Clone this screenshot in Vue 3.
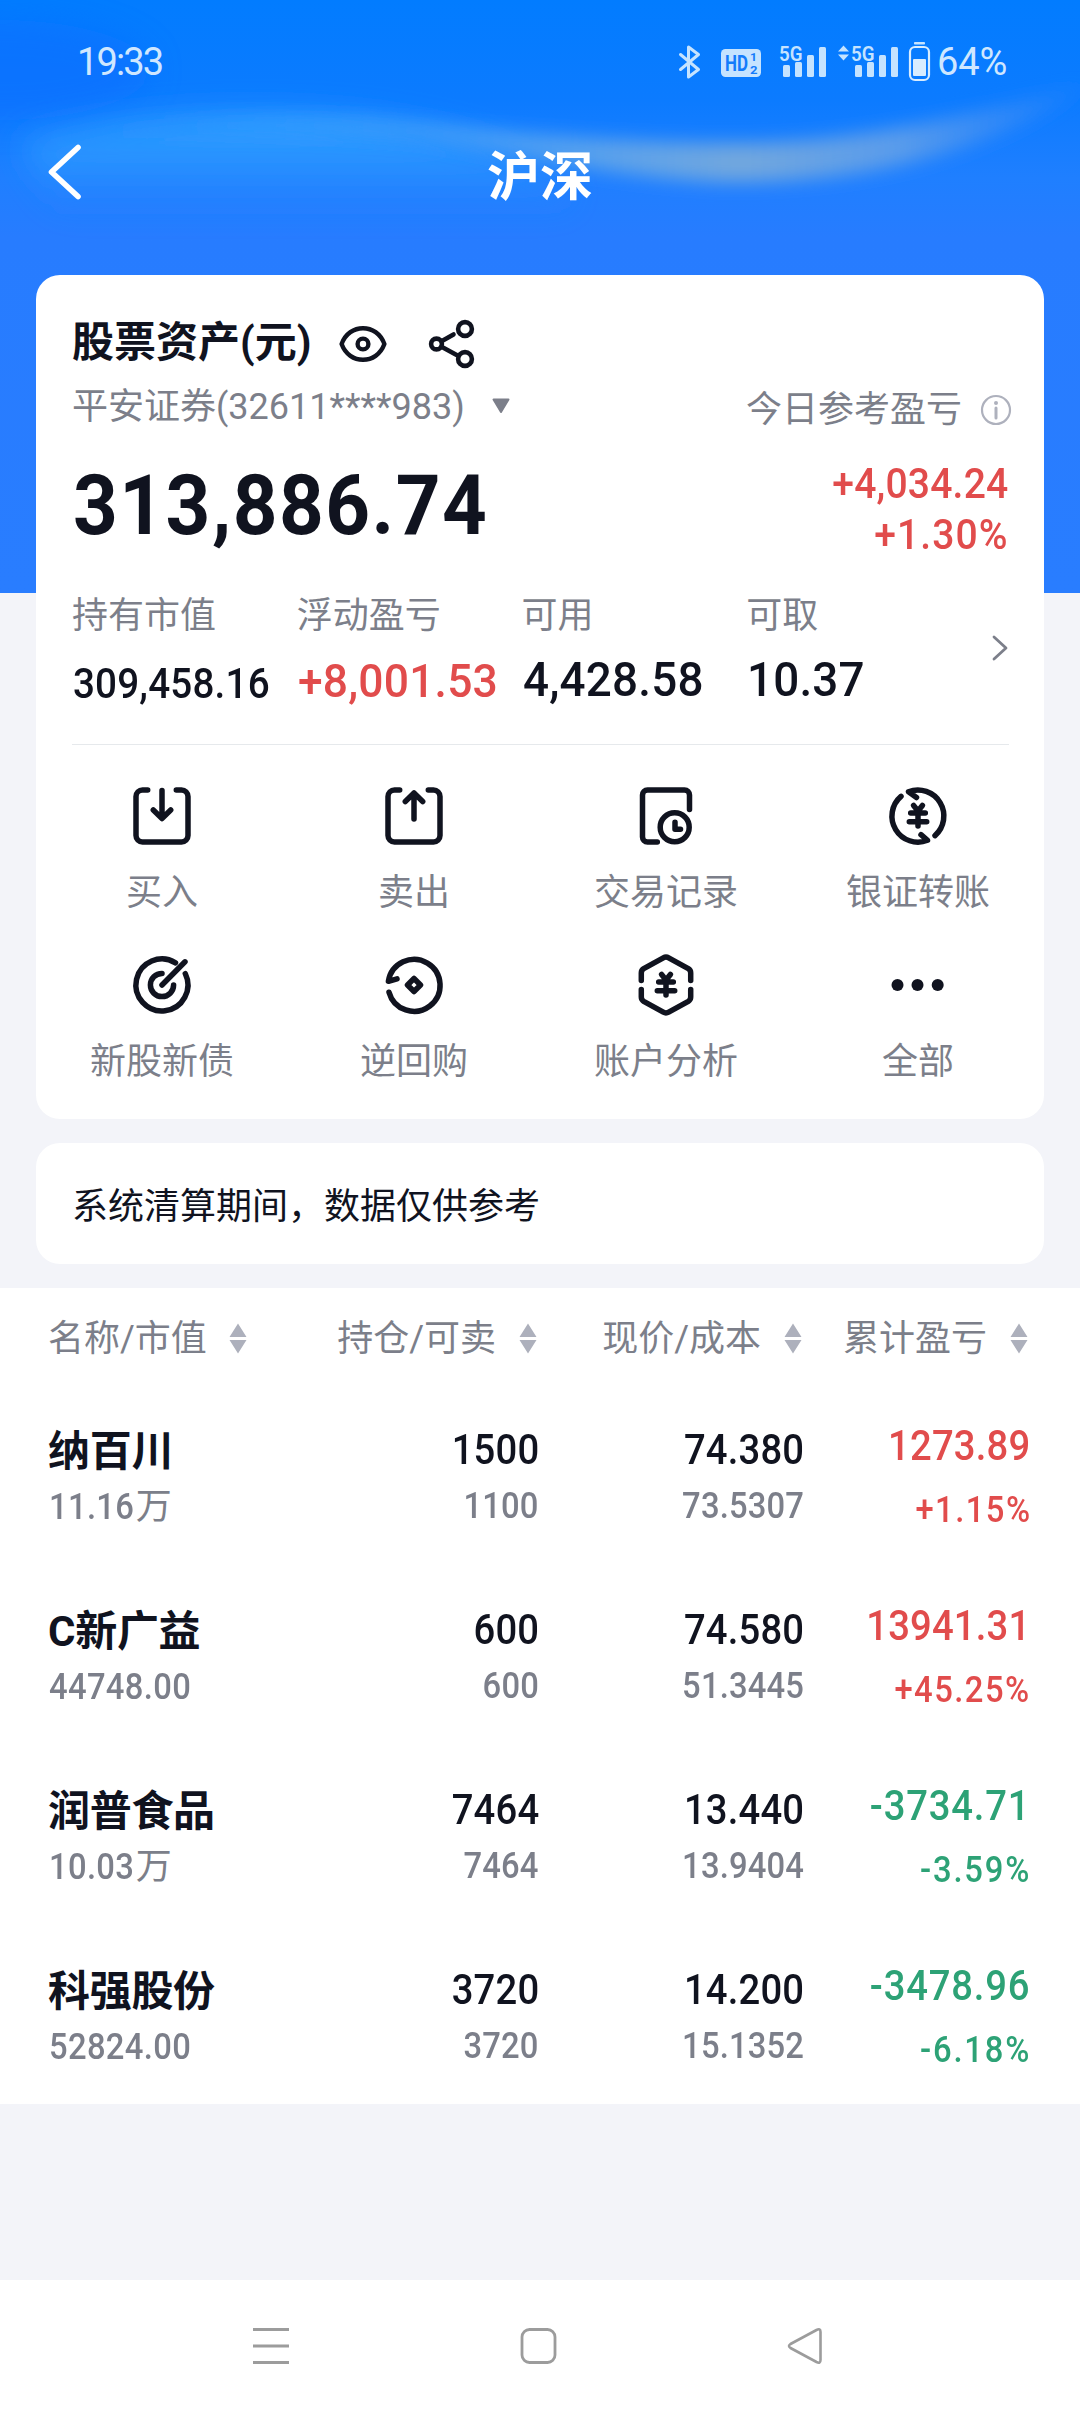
<script setup>
const stats = [
  { label: '持有市值', value: '309,458.16', size: 'small' },
  { label: '浮动盈亏', value: '+8,001.53', size: 'medium up' },
  { label: '可用', value: '4,428.58', size: 'large' },
  { label: '可取', value: '10.37', size: 'large' }
]

const yen = 'M25.6 19.5L30 25l4.4-5.5M30 25V40M22.7 27H37.3M21.3 35.7H38.7'

const actions = [
  {
    label: '买入',
    d: 'M15.7 4H10.5a6.5 6.5 0 0 0-6.5 6.5V49.5a6.5 6.5 0 0 0 6.5 6.5H49.5a6.5 6.5 0 0 0 6.5-6.5V10.5A6.5 6.5 0 0 0 49.5 4H44.3M30 4.5V32M21.3 24L30 32.5 38.7 24'
  },
  {
    label: '卖出',
    d: 'M15.7 4H10.5a6.5 6.5 0 0 0-6.5 6.5V49.5a6.5 6.5 0 0 0 6.5 6.5H49.5a6.5 6.5 0 0 0 6.5-6.5V10.5A6.5 6.5 0 0 0 49.5 4H44.3M30 33V7M21.3 15.5L30 7l8.7 8.5'
  },
  {
    label: '交易记录',
    d: 'M53.5 23.5V9a5 5 0 0 0-5-5H11.5a5 5 0 0 0-5 5V51a5 5 0 0 0 5 5H21.3M53.2 41.3a14.5 14.5 0 1 1-29 0a14.5 14.5 0 1 1 29 0M39 36.3V43.2H44.5'
  },
  {
    label: '银证转账',
    d: 'M13 10.4A26 26 0 0 0 39.5 54.3L33 48.7M47 49.6A26 26 0 0 0 20.5 5.8L28.5 11.5' + yen
  },
  {
    label: '新股新债',
    d: 'M43.5 7.8A26 26 0 1 0 53.3 18.6M30 18.4A11.6 11.6 0 1 0 41.6 30M30 30L53 6.8'
  },
  {
    label: '逆回购',
    d: 'M5 37.2A26 26 0 1 0 4.4 26.3L13 23.8M30 23.5L36.5 30 30 36.5 23.5 30z'
  },
  {
    label: '账户分析',
    d: 'M5.3 25.5V18q0-2.8 2.4-4.3L27.3 2.8q2.7-1.5 5.4 0L52.3 13.7q2.4 1.5 2.4 4.3V25.5M5.3 34.5V42q0 2.8 2.4 4.3L27.3 57.2q2.7 1.5 5.4 0L52.3 46.3q2.4-1.5 2.4-4.3V34.5' + yen
  },
  { label: '全部', dots: true }
]

const columns = ['名称/市值', '持仓/可卖', '现价/成本', '累计盈亏']

const holdings = [
  { name: '纳百川', value: '11.16', unit: '万', qty: '1500', sellable: '1100', price: '74.380', cost: '73.5307', profit: '1273.89', rate: '+1.15%', dir: 'up' },
  { name: 'C新广益', value: '44748.00', unit: '', qty: '600', sellable: '600', price: '74.580', cost: '51.3445', profit: '13941.31', rate: '+45.25%', dir: 'up' },
  { name: '润普食品', value: '10.03', unit: '万', qty: '7464', sellable: '7464', price: '13.440', cost: '13.9404', profit: '-3734.71', rate: '-3.59%', dir: 'down' },
  { name: '科强股份', value: '52824.00', unit: '', qty: '3720', sellable: '3720', price: '14.200', cost: '15.1352', profit: '-3478.96', rate: '-6.18%', dir: 'down' }
]
</script>

<template>
  <div class="page">
    <svg class="backdrop" width="1080" height="593" viewBox="0 0 1080 593" aria-hidden="true">
      <defs>
        <linearGradient id="base" x1="0" y1="0" x2="0" y2="1">
          <stop offset="0" stop-color="#027cff" />
          <stop offset="0.17" stop-color="#0c7bff" />
          <stop offset="0.3" stop-color="#1f7fff" />
          <stop offset="0.4" stop-color="#277cff" />
          <stop offset="1" stop-color="#297dff" />
        </linearGradient>
        <linearGradient id="wave" x1="0" y1="0" x2="1" y2="0">
          <stop offset="0" stop-color="#1f8cff" stop-opacity="0" />
          <stop offset="0.2" stop-color="#2f9dff" stop-opacity="0.7" />
          <stop offset="0.45" stop-color="#4a9ef5" />
          <stop offset="0.67" stop-color="#72a7de" />
          <stop offset="0.82" stop-color="#5a9ceb" />
          <stop offset="1" stop-color="#2f86fa" stop-opacity="0.3" />
        </linearGradient>
        <linearGradient id="fade" x1="0" y1="0" x2="0" y2="1">
          <stop offset="0" stop-color="#309fff" />
          <stop offset="0.45" stop-color="#2c99ff" stop-opacity="0.8" />
          <stop offset="1" stop-color="#277cff" stop-opacity="0" />
        </linearGradient>
        <filter id="soft" x="-20%" y="-50%" width="140%" height="200%"><feGaussianBlur stdDeviation="9" /></filter>
        <filter id="softer" x="-20%" y="-50%" width="140%" height="200%"><feGaussianBlur stdDeviation="16" /></filter>
      </defs>
      <rect width="1080" height="593" fill="url(#base)" />
      <ellipse cx="0" cy="70" rx="150" ry="50" fill="#0d6dff" opacity="0.55" filter="url(#softer)" />
      <path d="M20 142C120 112 300 104 430 130C540 152 600 190 560 216L60 216Z" fill="url(#fade)" filter="url(#softer)" />
      <path d="M30 140C160 118 300 112 420 124C540 134 620 142 720 143C860 145 960 115 1090 84C990 158 850 184 720 182C600 176 520 154 420 138C300 130 160 130 30 140Z" fill="url(#wave)" filter="url(#soft)" />
    </svg>

    <header class="top">
      <div class="status">
        <span class="clock">19:33</span>
        <svg class="status-icons" width="254" height="44" viewBox="679 40 254 44" aria-hidden="true">
          <path d="M680.5 54.5L698.5 69.5 688.5 77V47L698.5 54.5 680.5 69.5" fill="none" stroke="#c5e3ff" stroke-width="3" stroke-linejoin="round" stroke-linecap="round" />
          <rect x="721" y="49" width="40" height="28" rx="4.5" fill="#c5e3ff" />
          <g class="glyph dark">
            <text x="725" y="71.2" font-size="22" textLength="23" lengthAdjust="spacingAndGlyphs">HD</text>
            <text x="750" y="60.7" font-size="11" textLength="7" lengthAdjust="spacingAndGlyphs">1</text>
            <text x="750" y="74" font-size="11" textLength="7.5" lengthAdjust="spacingAndGlyphs">2</text>
          </g>
          <g fill="#c5e3ff">
            <text class="glyph" x="779" y="60.5" font-size="21" textLength="23.5" lengthAdjust="spacingAndGlyphs">5G</text>
            <rect x="783" y="65" width="7" height="12" rx="1.5" />
            <rect x="795" y="62" width="7" height="15" rx="1.5" />
            <rect x="807" y="55" width="7" height="22" rx="1.5" />
            <rect x="819" y="47" width="7" height="30" rx="1.5" />
            <path d="M838 51.5L843.5 45.5 849 51.5zM838 54.5L843.5 60.5 849 54.5z" />
            <text class="glyph" x="851" y="60.5" font-size="21" textLength="23.5" lengthAdjust="spacingAndGlyphs">5G</text>
            <rect x="855" y="65" width="7" height="12" rx="1.5" />
            <rect x="867" y="62" width="7" height="15" rx="1.5" />
            <rect x="879" y="55" width="7" height="22" rx="1.5" />
            <rect x="891" y="47" width="7" height="30" rx="1.5" />
            <rect x="914" y="42" width="11" height="2.6" rx="0.8" />
            <rect x="913" y="59" width="13" height="17" rx="1" fill="#d9edff" />
          </g>
          <rect x="910" y="47" width="19" height="33" rx="5" fill="none" stroke="#d9edff" stroke-width="2.2" />
        </svg>
        <span class="battery">64%</span>
      </div>
      <div class="bar">
        <svg class="back" width="36" height="58" viewBox="0 0 36 58" aria-hidden="true">
          <path d="M32 4.5L5.5 29 32 53.5" fill="none" stroke="#fff" stroke-width="5.6" stroke-linecap="round" stroke-linejoin="round" />
        </svg>
        <h1>沪深</h1>
      </div>
    </header>

    <section class="card assets">
      <div class="title">
        <h2>股票资产(元)</h2>
        <svg class="eye" width="48" height="38" viewBox="0 0 48 38" aria-hidden="true">
          <g fill="none" stroke="#10131f" stroke-width="4.4">
            <path d="M2.6 19C6.5 8.5 15 3.2 24 3.2S41.5 8.5 45.4 19C41.5 29.5 33 34.8 24 34.8S6.5 29.5 2.6 19z" stroke-linejoin="round" />
            <circle cx="24" cy="19" r="5.4" />
          </g>
        </svg>
        <svg class="share" width="48" height="50" viewBox="0 0 48 50" aria-hidden="true">
          <g fill="none" stroke="#10131f" stroke-width="4.6" stroke-linecap="round">
            <circle cx="8.5" cy="25" r="5.4" />
            <circle cx="37" cy="10" r="6.9" />
            <circle cx="37" cy="40" r="6.9" />
            <path d="M13.5 22.2L25.5 15.4M13.5 27.8L30.5 37" />
          </g>
        </svg>
      </div>

      <div class="account">
        <span>平安证券(32611****983)</span>
        <svg width="18" height="16" viewBox="0 0 18 16" aria-hidden="true"><path d="M1.5 1.5H16.5L9 14z" fill="#7c7f8a" stroke="#7c7f8a" stroke-width="2" stroke-linejoin="round" /></svg>
        <span class="today">今日参考盈亏</span>
        <svg class="info" width="32" height="32" viewBox="0 0 32 32" aria-hidden="true">
          <circle cx="16" cy="16" r="14" fill="none" stroke="#aeb1bd" stroke-width="2.2" />
          <circle cx="16" cy="9" r="2" fill="#aeb1bd" />
          <path d="M16 14V24" stroke="#aeb1bd" stroke-width="3" stroke-linecap="round" />
        </svg>
      </div>

      <div class="amount">
        <strong class="num">313,886.74</strong>
        <div class="gain up">
          <span class="num">+4,034.24</span>
          <span class="num percent">+1.30%</span>
        </div>
      </div>

      <div class="stats">
        <div v-for="s in stats" :key="s.label" class="stat">
          <span class="label">{{ s.label }}</span>
          <span class="num" :class="s.size">{{ s.value }}</span>
        </div>
        <svg class="more" width="18" height="28" viewBox="0 0 18 28" aria-hidden="true"><path d="M3 3L15 14 3 25" fill="none" stroke="#7c7f8a" stroke-width="2.8" stroke-linecap="round" stroke-linejoin="round" /></svg>
      </div>

      <nav class="actions">
        <div v-for="a in actions" :key="a.label" class="action">
          <svg width="60" height="60" viewBox="0 0 60 60" aria-hidden="true">
            <g v-if="a.dots" fill="#10131f">
              <circle cx="9.5" cy="30" r="6" /><circle cx="29.5" cy="30" r="6" /><circle cx="49.7" cy="30" r="6" />
            </g>
            <path v-else :d="a.d" fill="none" stroke="#10131f" stroke-width="5.5" stroke-linecap="round" stroke-linejoin="round" />
          </svg>
          <span>{{ a.label }}</span>
        </div>
      </nav>
    </section>

    <section class="card notice">系统清算期间，数据仅供参考</section>

    <section class="holdings">
      <div class="grid head">
        <div v-for="c in columns" :key="c" class="cell">
          <span>{{ c }}</span>
          <svg width="18" height="31" viewBox="0 0 18 31" aria-hidden="true"><path d="M0.5 14L9 0.5 17.5 14zM0.5 17L9 30.5 17.5 17z" fill="#adb0bc" /></svg>
        </div>
      </div>
      <div v-for="h in holdings" :key="h.name" class="grid row">
        <div class="cell left">
          <b>{{ h.name }}</b>
          <span class="sub"><span class="num">{{ h.value }}</span>{{ h.unit }}</span>
        </div>
        <div class="cell"><span class="num main">{{ h.qty }}</span><span class="num sub">{{ h.sellable }}</span></div>
        <div class="cell"><span class="num main">{{ h.price }}</span><span class="num sub">{{ h.cost }}</span></div>
        <div class="cell profit" :class="h.dir"><span class="num main">{{ h.profit }}</span><span class="num sub percent">{{ h.rate }}</span></div>
      </div>
    </section>

    <footer class="system">
      <svg width="36" height="38" viewBox="0 0 36 38" aria-hidden="true"><path d="M0 2.5H36M0 19H36M0 35.5H36" stroke="#9c9c9c" stroke-width="3" /></svg>
      <svg width="36" height="38" viewBox="0 0 36 38" aria-hidden="true"><rect x="2" y="2.5" width="33" height="33" rx="7.5" fill="none" stroke="#9c9c9c" stroke-width="2.8" /></svg>
      <svg width="36" height="38" viewBox="0 0 36 38" aria-hidden="true"><path d="M29.5 3L3.5 17Q0.5 19 3.5 21L29.5 35Q33.5 37 33.5 33V5Q33.5 1 29.5 3z" fill="none" stroke="#9c9c9c" stroke-width="2.6" stroke-linejoin="round" /></svg>
    </footer>
  </div>
</template>

<style>
body { margin: 0; background: #f3f4f9; }
</style>

<style scoped>
.page {
  position: relative;
  width: 1080px;
  height: 2412px;
  display: flex;
  flex-direction: column;
  overflow: hidden;
  background: #f3f4f9;
  color: #10131f;
  font-family: Roboto, "Noto Sans CJK SC", sans-serif;
  font-size: 36px;
}
svg { display: block; flex: none; overflow: visible; }
h1, h2 { margin: 0; }
.backdrop { position: absolute; top: 0; left: 0; overflow: hidden; }
.top, .card { position: relative; }
.top { height: 275px; flex: none; }
.glyph { font-family: Roboto, sans-serif; font-weight: 600; }
.dark { fill: #137bfb; font-weight: 700; }

.status {
  display: flex;
  align-items: center;
  height: 44px;
  padding: 40px 72px 0 77px;
  color: #cfe7ff;
  font-size: 38px;
  line-height: 48px;
}
.clock { letter-spacing: -1.9px; }
.status-icons { margin-left: auto; }
.battery { width: 71px; margin-left: 4px; letter-spacing: -0.1px; }
.bar {
  display: grid;
  grid-template-columns: 100px 1fr 100px;
  align-items: center;
  height: 80px;
  margin-top: 51px;
}
.back { margin: -9px 0 0 46px; }
h1 { padding-top: 3px; color: #fff; font-size: 53px; line-height: 80px; font-weight: 700; text-align: center; }

.card { margin: 0 36px; border-radius: 24px; background: #fff; flex: none; }
.assets { height: 844px; box-sizing: border-box; padding-top: 44px; }
.title { display: flex; align-items: center; height: 48px; padding-left: 36px; }
h2 { width: 238px; white-space: nowrap; font-size: 42px; line-height: 48px; font-weight: 700; }
.eye { margin-left: 29px; margin-top: 2px; }
.share { margin-left: 41px; margin-top: 2px; }
.account {
  display: flex;
  align-items: center;
  height: 48px;
  margin-top: 16px;
  padding: 0 32px 0 36px;
  color: #7c7f8a;
  line-height: 50px;
}
.account span + svg { margin: -3px 0 0 27px; }
.account .today { margin: 6px 0 0 auto; }
.account .info { margin: 5px 0 0 18px; }

.num { display: inline-block; font-weight: 500; transform: scaleX(0.91); transform-origin: left center; white-space: nowrap; letter-spacing: 0.2px; }
.up { color: #e14c4c; }
.down { color: #2da276; }
.amount { display: flex; justify-content: space-between; height: 102px; margin-top: 26px; padding: 0 36px; }
.amount strong { font-size: 84px; line-height: 98px; font-weight: 700; letter-spacing: 1.6px; margin-left: 1px; transform: scaleX(0.93); }
.gain { display: flex; flex-direction: column; align-items: flex-end; padding-top: 1px; }
.gain .num { font-size: 42px; line-height: 51px; transform-origin: right center; transform: scaleX(0.93); }
.gain .percent { letter-spacing: 1.2px; margin-right: -1px; }

.stats {
  display: flex;
  height: 151px;
  margin: 34px 35px 0 36px;
  border-bottom: 1px solid #e6e9ec;
}
.stat { width: 226px; display: flex; flex-direction: column; }
.stats .stat:nth-child(4) { width: 246px; }
.label { line-height: 46px; color: #7c7f8a; }
.stat .num { line-height: 48px; padding-left: 1px; }
.stat .small { margin-top: 21px; font-size: 42px; transform: scaleX(0.92); }
.stat .medium { margin-top: 18px; font-size: 46px; transform: scaleX(0.965); }
.stat .large { margin-top: 17px; font-size: 49px; transform: scaleX(0.935); }
.more { margin-top: 41px; }

.actions { display: grid; grid-template-columns: repeat(4, 1fr); row-gap: 42px; padding-top: 41px; }
.action { display: flex; flex-direction: column; align-items: center; }
.action span { margin-top: 25px; margin-bottom: -2px; line-height: 44px; color: #7c7f8a; }

.notice { height: 121px; margin-top: 24px; padding-left: 36px; line-height: 128px; }

.holdings { margin-top: 24px; height: 816px; flex: none; background: #fff; }
.grid { display: grid; grid-template-columns: 290px 201px 265px 226px; padding-left: 48px; }
.head { height: 92px; padding-top: 4px; color: #7c7f8a; }
.head .cell { display: flex; align-items: center; justify-content: flex-end; gap: 23px; padding-right: 2px; white-space: nowrap; line-height: 44px; }
.head .cell span { padding-top: 2px; }
.head .cell:first-child { justify-content: flex-start; gap: 22px; }
.row { height: 180px; }
.row .cell { display: flex; flex-direction: column; align-items: flex-end; padding-top: 38px; line-height: 56px; }
.row .left { align-items: flex-start; }
.row .cell > .num { transform-origin: right center; }
.row b { font-size: 42px; font-weight: 700; letter-spacing: -0.3px; margin: 2px 0 -2px; }
.main { font-size: 42px; }
.sub { color: #7c7f8a; font-size: 36px; }
.left .sub { display: flex; margin-top: 1px; }
.left .sub .num { margin-right: -7px; padding-left: 1px; letter-spacing: 0.4px; }
.row .profit { padding-top: 30px; line-height: 64px; }
.profit .sub { color: inherit; }
.profit .percent { letter-spacing: 1.6px; margin-right: -1px; }
.down .main { letter-spacing: 0.9px; }
.down .percent { letter-spacing: 2px; }

.system {
  display: flex;
  justify-content: space-between;
  height: 85px;
  margin-top: auto;
  padding: 47px 257px 0 253px;
  background: #fff;
  flex: none;
}
</style>
